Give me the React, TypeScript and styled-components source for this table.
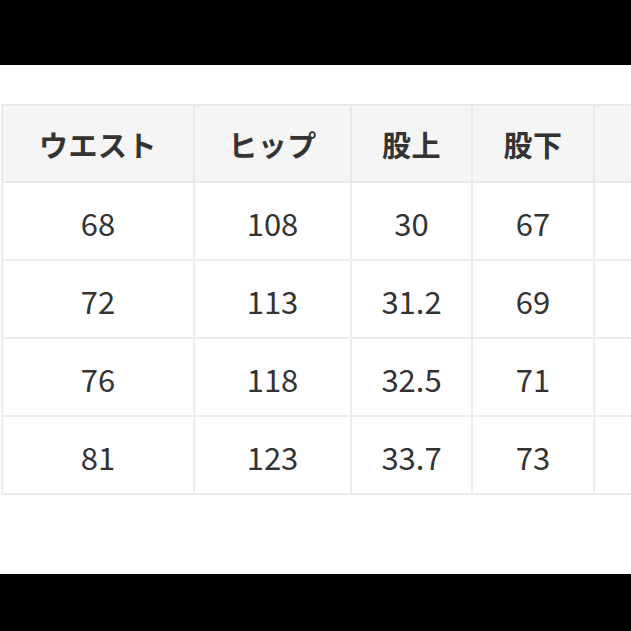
import React from "react";
import styled, { createGlobalStyle } from "styled-components";

const Global = createGlobalStyle`
  html, body { margin: 0; padding: 0; background: #fff; overflow: hidden; }
  body { font-family: "Noto Sans CJK JP", "Noto Sans", sans-serif; }
`;

const Page = styled.div`
  width: 631px;
  height: 631px;
  display: flex;
  flex-direction: column;
  overflow: hidden;
`;

const Bar = styled.div<{ $h: number }>`
  height: ${(p) => p.$h}px;
  flex: none;
  background: #000;
`;

const Content = styled.div`
  flex: 1;
  background: #fff;
  padding: 39px 0 0 1px;
  overflow: hidden;
`;

const Table = styled.table`
  border-collapse: collapse;
  table-layout: fixed;
  width: 762px;
  color: #333;
`;

const HeadCell = styled.th`
  background: #f5f5f5;
  border: 2px solid #e9e9e9;
  height: 75px;
  padding: 0;
  font-size: 29px;
  font-weight: 700;
  text-align: center;
  vertical-align: middle;
  letter-spacing: 0.5px;
`;

const Cell = styled.td`
  background: #fff;
  border: 2px solid #ececec;
  height: 74px;
  padding: 2px 0 0;
  font-size: 31px;
  font-weight: 400;
  text-align: center;
  vertical-align: middle;
`;

const widths = [192, 157, 121, 122, 170];
const headers = ["ウエスト", "ヒップ", "股上", "股下", "裾幅"];
const rows = [
  ["68", "108", "30", "67", "22"],
  ["72", "113", "31.2", "69", "23"],
  ["76", "118", "32.5", "71", "24"],
  ["81", "123", "33.7", "73", "25"],
];

export default function App() {
  return (
    <>
      <Global />
      <Page>
        <Bar $h={65} />
        <Content>
          <Table>
            <colgroup>
              {widths.map((w, i) => (
                <col key={i} style={{ width: w }} />
              ))}
            </colgroup>
            <thead>
              <tr>
                {headers.map((h) => (
                  <HeadCell key={h}>{h}</HeadCell>
                ))}
              </tr>
            </thead>
            <tbody>
              {rows.map((r, i) => (
                <tr key={i}>
                  {r.map((v, j) => (
                    <Cell key={j}>{v}</Cell>
                  ))}
                </tr>
              ))}
            </tbody>
          </Table>
        </Content>
        <Bar $h={57} />
      </Page>
    </>
  );
}
